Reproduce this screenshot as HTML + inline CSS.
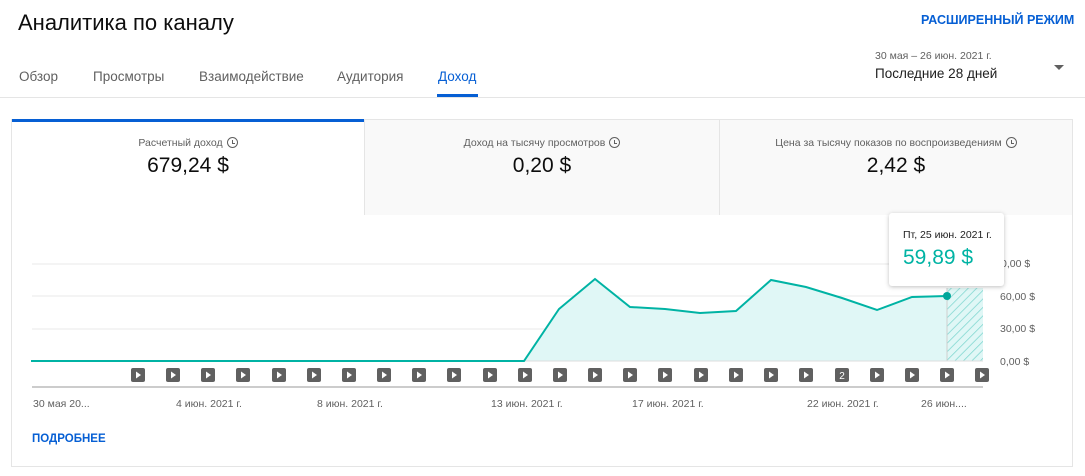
<!DOCTYPE html><html><head><meta charset="utf-8"><style>
body{margin:0;width:1085px;height:476px;background:#fff;font-family:"Liberation Sans",sans-serif;position:relative;overflow:hidden}
.a{position:absolute;white-space:nowrap}
.c{display:inline-block;width:9px;height:9px;border:1.3px solid #606060;border-radius:50%;vertical-align:-2px;margin-left:4px;position:relative}
.c:after{content:"";position:absolute;left:4px;top:1.5px;width:2px;height:3px;border-left:1.2px solid #606060;border-bottom:1.2px solid #606060}
</style></head><body>
<div class="a" style="left:18px;top:10px;font-size:22px;color:#0d0d0d">Аналитика по каналу</div>
<div class="a" style="left:921px;top:13px;font-size:12.5px;font-weight:bold;color:#065fd4">РАСШИРЕННЫЙ РЕЖИМ</div>
<div class="a" style="left:875px;top:50px;font-size:10.5px;color:#606060">30 мая – 26 июн. 2021 г.</div>
<div class="a" style="left:875px;top:66px;font-size:13.5px;color:#202020">Последние 28 дней</div>
<div class="a" style="left:1054px;top:65px;width:0;height:0;border-left:5px solid transparent;border-right:5px solid transparent;border-top:5px solid #606060"></div>
<div class="a" style="left:19px;top:69px;font-size:13.5px;color:#606060">Обзор</div>
<div class="a" style="left:93px;top:69px;font-size:13.5px;color:#606060">Просмотры</div>
<div class="a" style="left:199px;top:69px;font-size:13.5px;color:#606060">Взаимодействие</div>
<div class="a" style="left:337px;top:69px;font-size:13.5px;color:#606060">Аудитория</div>
<div class="a" style="left:438px;top:69px;font-size:13.5px;color:#065fd4">Доход</div>
<div class="a" style="left:437px;top:94px;width:41px;height:3px;background:#065fd4"></div>
<div class="a" style="left:0;top:97px;width:1085px;height:1px;background:#e5e5e5"></div>
<div class="a" style="left:11px;top:119px;width:1060px;height:346px;border:1px solid #e5e5e5"></div>
<div class="a" style="left:364px;top:120px;width:708px;height:95px;background:#f9f9f9"></div>
<div class="a" style="left:364px;top:120px;width:1px;height:95px;background:#e5e5e5"></div>
<div class="a" style="left:719px;top:120px;width:1px;height:95px;background:#e5e5e5"></div>
<div class="a" style="left:12px;top:119px;width:352px;height:3px;background:#065fd4"></div>
<div class="a" style="left:12px;top:137px;width:352px;text-align:center;font-size:10.5px;color:#606060">Расчетный доход<span class="c"></span></div>
<div class="a" style="left:12px;top:154px;width:352px;text-align:center;font-size:21px;color:#0d0d0d">679,24 $</div>
<div class="a" style="left:365px;top:137px;width:354px;text-align:center;font-size:10.5px;color:#606060">Доход на тысячу просмотров<span class="c"></span></div>
<div class="a" style="left:365px;top:154px;width:354px;text-align:center;font-size:21px;color:#0d0d0d">0,20 $</div>
<div class="a" style="left:720px;top:137px;width:352px;text-align:center;font-size:10.5px;color:#606060">Цена за тысячу показов по воспроизведениям<span class="c"></span></div>
<div class="a" style="left:720px;top:154px;width:352px;text-align:center;font-size:21px;color:#0d0d0d">2,42 $</div>
<svg class="a" style="left:0;top:0" width="1085" height="476">
<defs><pattern id="h" width="6" height="6" patternUnits="userSpaceOnUse" patternTransform="rotate(45)"><rect width="6" height="6" fill="#e0f7f6"/><line x1="0" y1="0" x2="0" y2="6" stroke="#7dd6cf" stroke-width="1.5"/></pattern></defs>
<g stroke="#e8e8e8"><line x1="32" y1="264" x2="983" y2="264"/><line x1="32" y1="296" x2="983" y2="296"/><line x1="32" y1="329" x2="983" y2="329"/></g>
<polygon fill="#e0f7f6" points="31,361 524,361 559,309 595,279 630,307 665,309 700,313 736,311 771,280 806,287 842,298 877,310 912,297 947,296 947,361"/>
<rect x="947" y="288" width="36" height="73" fill="url(#h)"/>
<line x1="947" y1="288" x2="947" y2="361" stroke="#cfcfcf"/>
<line x1="32" y1="361" x2="983" y2="361" stroke="#ddd"/>
<polyline fill="none" stroke="#00b3a4" stroke-width="2" points="31,361 524,361 559,309 595,279 630,307 665,309 700,313 736,311 771,280 806,287 842,298 877,310 912,297 947,296"/>
<circle cx="947" cy="296" r="4" fill="#00a69a"/>
<line x1="32" y1="387" x2="983" y2="387" stroke="#ccc" stroke-width="2"/>
</svg>
<div class="a" style="left:131px;top:368px;width:860px;height:14px">
<svg width="860" height="14">
<g fill="#606060">
<rect x="0" y="0" width="14" height="14" rx="2"/><rect x="35" y="0" width="14" height="14" rx="2"/><rect x="70" y="0" width="14" height="14" rx="2"/><rect x="105" y="0" width="14" height="14" rx="2"/><rect x="141" y="0" width="14" height="14" rx="2"/><rect x="176" y="0" width="14" height="14" rx="2"/><rect x="211" y="0" width="14" height="14" rx="2"/><rect x="246" y="0" width="14" height="14" rx="2"/><rect x="281" y="0" width="14" height="14" rx="2"/><rect x="316" y="0" width="14" height="14" rx="2"/><rect x="352" y="0" width="14" height="14" rx="2"/><rect x="387" y="0" width="14" height="14" rx="2"/><rect x="422" y="0" width="14" height="14" rx="2"/><rect x="457" y="0" width="14" height="14" rx="2"/><rect x="492" y="0" width="14" height="14" rx="2"/><rect x="527" y="0" width="14" height="14" rx="2"/><rect x="563" y="0" width="14" height="14" rx="2"/><rect x="598" y="0" width="14" height="14" rx="2"/><rect x="633" y="0" width="14" height="14" rx="2"/><rect x="668" y="0" width="14" height="14" rx="2"/><rect x="704" y="0" width="14" height="14" rx="2"/><rect x="739" y="0" width="14" height="14" rx="2"/><rect x="774" y="0" width="14" height="14" rx="2"/><rect x="809" y="0" width="14" height="14" rx="2"/><rect x="844" y="0" width="14" height="14" rx="2"/>
</g>
<g fill="#fff">
<path d="M5 3.5L10 7L5 10.5Z"/><path d="M40 3.5L45 7L40 10.5Z"/><path d="M75 3.5L80 7L75 10.5Z"/><path d="M110 3.5L115 7L110 10.5Z"/><path d="M146 3.5L151 7L146 10.5Z"/><path d="M181 3.5L186 7L181 10.5Z"/><path d="M216 3.5L221 7L216 10.5Z"/><path d="M251 3.5L256 7L251 10.5Z"/><path d="M286 3.5L291 7L286 10.5Z"/><path d="M321 3.5L326 7L321 10.5Z"/><path d="M357 3.5L362 7L357 10.5Z"/><path d="M392 3.5L397 7L392 10.5Z"/><path d="M427 3.5L432 7L427 10.5Z"/><path d="M462 3.5L467 7L462 10.5Z"/><path d="M497 3.5L502 7L497 10.5Z"/><path d="M532 3.5L537 7L532 10.5Z"/><path d="M568 3.5L573 7L568 10.5Z"/><path d="M603 3.5L608 7L603 10.5Z"/><path d="M638 3.5L643 7L638 10.5Z"/><path d="M673 3.5L678 7L673 10.5Z"/><text x="711" y="11" font-size="10" font-family="Liberation Sans" text-anchor="middle">2</text><path d="M744 3.5L749 7L744 10.5Z"/><path d="M779 3.5L784 7L779 10.5Z"/><path d="M814 3.5L819 7L814 10.5Z"/><path d="M849 3.5L854 7L849 10.5Z"/>
</g></svg></div>
<div class="a" style="left:33px;top:398px;font-size:10.5px;color:#606060">30 мая 20...</div>
<div class="a" style="left:176px;top:398px;font-size:10.5px;color:#606060">4 июн. 2021 г.</div>
<div class="a" style="left:317px;top:398px;font-size:10.5px;color:#606060">8 июн. 2021 г.</div>
<div class="a" style="left:491px;top:398px;font-size:10.5px;color:#606060">13 июн. 2021 г.</div>
<div class="a" style="left:632px;top:398px;font-size:10.5px;color:#606060">17 июн. 2021 г.</div>
<div class="a" style="left:807px;top:398px;font-size:10.5px;color:#606060">22 июн. 2021 г.</div>
<div class="a" style="left:921px;top:398px;font-size:10.5px;color:#606060">26 июн....</div>
<div class="a" style="left:1001px;top:258px;font-size:10.5px;color:#606060">0,00 $</div>
<div class="a" style="left:1000px;top:291px;font-size:10.5px;color:#606060">60,00 $</div>
<div class="a" style="left:1000px;top:323px;font-size:10.5px;color:#606060">30,00 $</div>
<div class="a" style="left:1000px;top:356px;font-size:10.5px;color:#606060">0,00 $</div>
<div class="a" style="left:889px;top:213px;width:115px;height:73px;background:#fff;border-radius:3px;box-shadow:0 1px 4px rgba(0,0,0,.25)"></div>
<div class="a" style="left:903px;top:229px;font-size:10.5px;color:#202020">Пт, 25 июн. 2021 г.</div>
<div class="a" style="left:903px;top:246px;font-size:21px;color:#00b3a4">59,89 $</div>
<div class="a" style="left:32px;top:433px;font-size:11.5px;font-weight:bold;color:#065fd4">ПОДРОБНЕЕ</div>
</body></html>
